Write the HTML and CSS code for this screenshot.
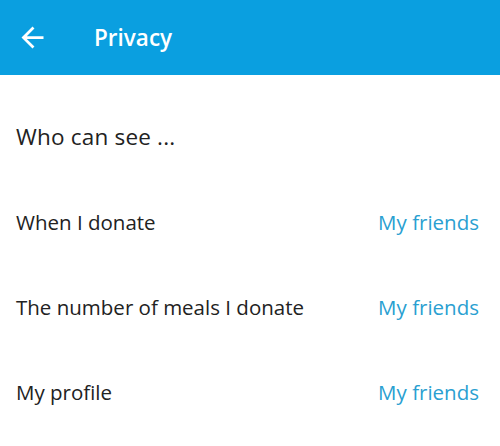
FILE: index.html
```html
<!DOCTYPE html>
<html>
<head>
<meta charset="utf-8">
<link rel="stylesheet" href="styles.css">
</head>
<body>
<div class="toolbar">
  <span class="back">
    <svg width="33" height="33" viewBox="0 0 24 24"><path d="M20 11H7.830l5.59-5.59L12 4l-8 8 8 8 1.41-1.41L7.83 13H20v-2z" fill="#fff"/></svg>
  </span>
  <span class="title">Privacy</span>
</div>
<div class="content">
  <div class="heading">Who can see ...</div>
  <div class="row">
    <span class="label">When I donate</span>
    <span class="value">My friends</span>
  </div>
  <div class="row">
    <span class="label">The number of meals I donate</span>
    <span class="value">My friends</span>
  </div>
  <div class="row">
    <span class="label">My profile</span>
    <span class="value">My friends</span>
  </div>
</div>
</body>
</html>
```
FILE: styles.css
```css
body {
	margin:0;
	background-color:#fff;
	font-family:"Open Sans", "Noto Sans", sans-serif;
}
.toolbar {
	height:75px;
	background-color:#0a9fe0;
	display:flex;
	align-items:center;
	color:#fff;
}
.toolbar .back {
	width:94px;
	padding-left:16px;
	box-sizing:border-box;
	display:flex;
}
.toolbar .title {
	font-size:22.5px;
	font-weight:600;
}
.content {
	padding:19px 21px 0 16px;
}
.heading {
	height:85px;
	display:flex;
	align-items:center;
	font-size:22.5px;
	letter-spacing:0.2px;
	color:#222;
}
.row {
	height:85px;
	display:flex;
	align-items:center;
	justify-content:space-between;
	font-size:20.5px;
}
.row .label {
	color:#222;
}
.row .value {
	color:#2a9fd1;
}
```
